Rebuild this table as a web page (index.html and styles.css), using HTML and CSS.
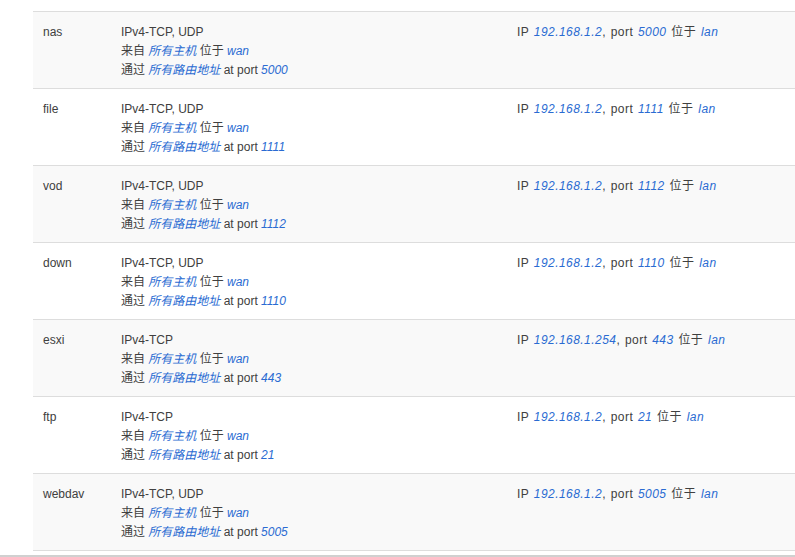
FILE: index.html
```
<!DOCTYPE html>
<html lang="zh-CN">
<head>
  <meta charset="UTF-8" />
  <title>端口转发</title>
  <link rel="stylesheet" href="styles.css">
</head>
<body>
  <div class="wrap">
    <table class="rules">
      <tr class="odd">
        <td class="name">nas</td>
        <td class="match">IPv4-TCP, UDP<br>来自 <a>所有主机</a> 位于 <a>wan</a><br>通过 <a>所有路由地址</a> at port <a>5000</a></td>
        <td class="dest">IP <a>192.168.1.2</a>, port <a>5000</a> 位于 <a>lan</a></td>
      </tr>
      <tr>
        <td class="name">file</td>
        <td class="match">IPv4-TCP, UDP<br>来自 <a>所有主机</a> 位于 <a>wan</a><br>通过 <a>所有路由地址</a> at port <a>1111</a></td>
        <td class="dest">IP <a>192.168.1.2</a>, port <a>1111</a> 位于 <a>lan</a></td>
      </tr>
      <tr class="odd">
        <td class="name">vod</td>
        <td class="match">IPv4-TCP, UDP<br>来自 <a>所有主机</a> 位于 <a>wan</a><br>通过 <a>所有路由地址</a> at port <a>1112</a></td>
        <td class="dest">IP <a>192.168.1.2</a>, port <a>1112</a> 位于 <a>lan</a></td>
      </tr>
      <tr>
        <td class="name">down</td>
        <td class="match">IPv4-TCP, UDP<br>来自 <a>所有主机</a> 位于 <a>wan</a><br>通过 <a>所有路由地址</a> at port <a>1110</a></td>
        <td class="dest">IP <a>192.168.1.2</a>, port <a>1110</a> 位于 <a>lan</a></td>
      </tr>
      <tr class="odd">
        <td class="name">esxi</td>
        <td class="match">IPv4-TCP<br>来自 <a>所有主机</a> 位于 <a>wan</a><br>通过 <a>所有路由地址</a> at port <a>443</a></td>
        <td class="dest">IP <a>192.168.1.254</a>, port <a>443</a> 位于 <a>lan</a></td>
      </tr>
      <tr>
        <td class="name">ftp</td>
        <td class="match">IPv4-TCP<br>来自 <a>所有主机</a> 位于 <a>wan</a><br>通过 <a>所有路由地址</a> at port <a>21</a></td>
        <td class="dest">IP <a>192.168.1.2</a>, port <a>21</a> 位于 <a>lan</a></td>
      </tr>
      <tr class="odd">
        <td class="name">webdav</td>
        <td class="match">IPv4-TCP, UDP<br>来自 <a>所有主机</a> 位于 <a>wan</a><br>通过 <a>所有路由地址</a> at port <a>5005</a></td>
        <td class="dest">IP <a>192.168.1.2</a>, port <a>5005</a> 位于 <a>lan</a></td>
      </tr>
    </table>
  </div>
  <div class="page-end"></div>
</body>
</html>
```

FILE: styles.css
```
* {
  margin: 0;
  padding: 0;
  box-sizing: border-box;
}

body {
  font-family: 'Liberation Sans', Arial, 'Noto Sans CJK SC', sans-serif;
  font-size: 12px;
  color: #404040;
  background: #fff;
}

.wrap {
  padding: 11px 0 0 33px;
}

.rules {
  width: 100%;
  border-collapse: collapse;
  border-top: 1px solid #ddd;
}

.rules tr {
  height: 77px;
  border-bottom: 1px solid #ddd;
}

.rules tr.odd {
  background: #f9f9f9;
}

.rules td {
  vertical-align: top;
  padding: 11px 0 8px;
  line-height: 19px;
}

.rules td.name {
  width: 88px;
  padding-left: 10px;
}

.rules td.match {
  width: 396px;
}

.rules td.dest {
  letter-spacing: 0.45px;
  word-spacing: 1px;
}

.rules a {
  color: #2a6bd2;
  font-style: italic;
  cursor: pointer;
}

.page-end {
  margin-top: 4px;
  border-top: 2px solid #d0d0d0;
}
```
